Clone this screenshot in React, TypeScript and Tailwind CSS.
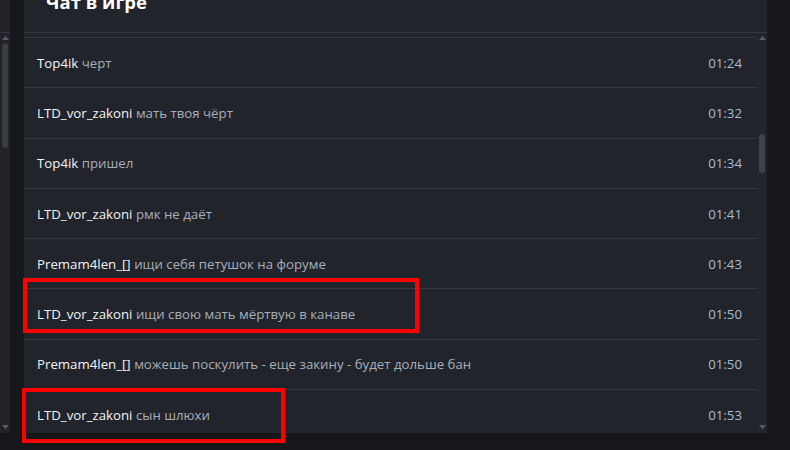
import React from "react";

const rows = [
  { name: "Top4ik", msg: "черт", time: "01:24" },
  { name: "LTD_vor_zakoni", msg: "мать твоя чёрт", time: "01:32" },
  { name: "Top4ik", msg: "пришел", time: "01:34" },
  { name: "LTD_vor_zakoni", msg: "рмк не даёт", time: "01:41" },
  { name: "Premam4len_[]", msg: "ищи себя петушок на форуме", time: "01:43" },
  { name: "LTD_vor_zakoni", msg: "ищи свою мать мёртвую в канаве", time: "01:50" },
  { name: "Premam4len_[]", msg: "можешь поскулить - еще закину - будет дольше бан", time: "01:50" },
  { name: "LTD_vor_zakoni", msg: "сын шлюхи", time: "01:53" },
];

function UpArrow() {
  return (
    <svg width="7" height="4" viewBox="0 0 7 4" className="block">
      <path d="M0 4 L3.5 0 L7 4 Z" fill="#5a5d64" />
    </svg>
  );
}
function DownArrow() {
  return (
    <svg width="7" height="4" viewBox="0 0 7 4" className="block">
      <path d="M0 0 L3.5 4 L7 0 Z" fill="#5a5d64" />
    </svg>
  );
}

export default function App() {
  return (
    <div
      className="relative w-[790px] h-[450px] overflow-hidden bg-[#16171a]"
      style={{ fontFamily: '"Open Sans", "Noto Sans", sans-serif' }}
    >
      <div className="flex h-[433px]">
        {/* left scrollbar */}
        <div className="w-[10px] flex flex-col bg-[#212329]">
          <div className="h-[33px] border-b border-[#34373e]" />
          <div className="flex-1 flex flex-col items-center pt-[3px] pb-[4px]">
            <UpArrow />
            <div className="mt-[3px] w-[6px] h-[105px] rounded-full bg-[#3a3d44]" />
            <div className="flex-1" />
            <DownArrow />
          </div>
        </div>
        <div className="w-[14px] bg-[#17181b]" />
        {/* panel */}
        <div className="w-[743px] flex flex-col bg-[#21242a]">
          <div className="h-[33px] border-b border-[#34373e] pl-[22px] overflow-hidden">
            <div className="text-[18.5px] leading-[20px] font-bold text-white mt-[-8px]">Чат в игре</div>
          </div>
          <div className="flex-1 flex min-h-0">
            <div className="flex-1 flex flex-col pt-[4px] overflow-hidden">
              {rows.map((r, i) => (
                <div
                  key={i}
                  className="shrink-0 h-[50.3px] border-t border-[#34373e] flex items-center justify-between pl-[13px] pr-[15px] text-[13.25px] leading-[18px]"
                >
                  <div>
                    <span className="text-[#f2f3f5]">{r.name}</span>{" "}
                    <span className="text-[#a7afbb]">{r.msg}</span>
                  </div>
                  <div className="text-[#a9bdd2]">{r.time}</div>
                </div>
              ))}
            </div>
            <div className="w-[10px] bg-[#23252b] flex flex-col items-center pt-[3px] pb-[4px]">
              <UpArrow />
              <div className="mt-[94px] w-[6px] h-[39px] rounded-full bg-[#3f4249]" />
              <div className="flex-1" />
              <DownArrow />
            </div>
          </div>
        </div>
        <div className="flex-1 bg-[#17181b]" />
      </div>

      {/* red annotation boxes */}
      <div className="absolute left-[23px] top-[278px] w-[396px] h-[55px] border-4 border-[#ff0000]" />
      <div className="absolute left-[22px] top-[388px] w-[263px] h-[55px] border-4 border-[#ff0000]" />
    </div>
  );
}
